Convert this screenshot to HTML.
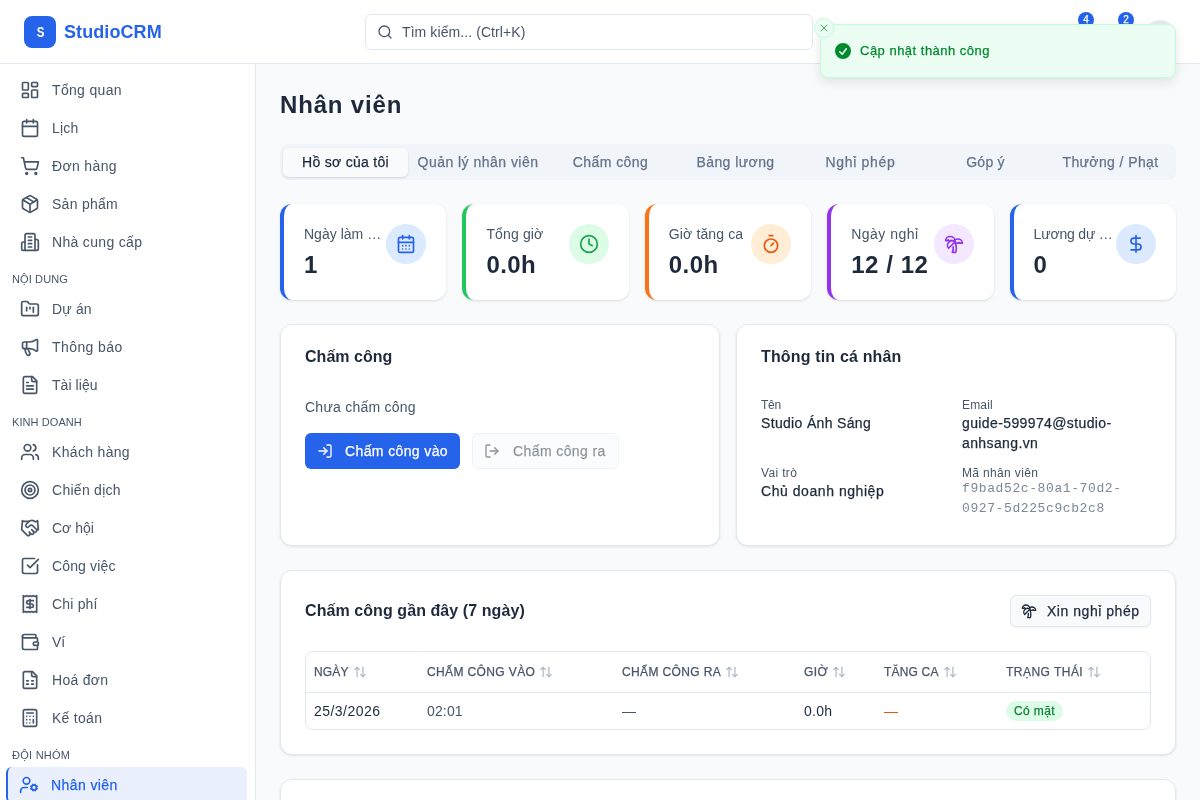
<!DOCTYPE html>
<html lang="vi"><head>
<meta charset="utf-8">
<title>StudioCRM - Nhân viên</title>
<style>
*{box-sizing:border-box;margin:0;padding:0}
html,body{width:1200px;height:800px;overflow:hidden}
body{font-family:"Liberation Sans",sans-serif;background:#f8fafc;color:#1e293b;position:relative;-webkit-font-smoothing:antialiased}
#root{position:absolute;left:0;top:0;width:1200px;height:800px;overflow:hidden;will-change:transform}
.abs{position:absolute}
svg.i{fill:none;stroke:currentColor;stroke-width:2;stroke-linecap:round;stroke-linejoin:round;display:block}
/* header */
#hdr{left:0;top:0;width:1200px;height:64px;background:#fff;border-bottom:1px solid #e2e8f0}
#logo{left:24px;top:16px;width:32px;height:32px;border-radius:8px;background:#2563eb;color:#fff;font-weight:700;font-size:14px;line-height:32px;text-align:center}
#brand{left:64px;top:20px;height:24px;line-height:24px;font-size:18px;font-weight:700;color:#2563eb;white-space:nowrap}
#search{left:365px;top:14px;width:448px;height:36px;border:1px solid #e2e8f0;border-radius:6px;background:#fff}
#search svg{position:absolute;left:11px;top:9px;color:#475569}
#search span{position:absolute;left:36px;top:7px;line-height:20px;font-size:14px;color:#475569;white-space:nowrap}
.badge{width:16px;height:16px;border-radius:8px;background:#2563eb;color:#fff;font-size:10px;line-height:16px;text-align:center;font-weight:500}
#avatar{left:1144px;top:20px;width:32px;height:32px;border-radius:16px;background:#e8ecf1}
/* sidebar */
#side{left:0;top:64px;width:256px;height:736px;background:#fff;border-right:1px solid #e2e8f0}
.nav{position:absolute;left:6px;width:241px;height:36px;border-left:2px solid transparent;border-radius:6px;color:#475569;font-size:14px}
.nav svg{position:absolute;left:12px;top:8px}
.nav span{position:absolute;left:44px;top:8px;line-height:20px;white-space:nowrap}
.nav.act{background:#e9effd;border-left-color:#2563eb;color:#2563eb}
.nav.act svg{left:11px}.nav.act span{left:43px}
.sec{position:absolute;left:12px;font-size:11px;font-weight:400;color:#475569;line-height:16px;white-space:nowrap;letter-spacing:0}
/* main */
#title{left:280px;top:88.5px;line-height:32px;font-size:24px;font-weight:700;color:#1e293b;white-space:nowrap}
#tabs{left:280px;top:144px;width:896px;height:36px;background:#f1f5f9;border-radius:8px}
.tab{position:absolute;top:3.5px;height:29px;line-height:27px;border:1px solid transparent;border-radius:6px;text-align:center;font-size:14px;font-weight:500;color:#64748b;white-space:nowrap}
.tab.act{background:#f8fafc;color:#1e293b;box-shadow:0 1px 3px rgba(0,0,0,.1),0 1px 2px -1px rgba(0,0,0,.1)}
.stat{position:absolute;top:204px;width:166.4px;height:96px;background:#fff;border-radius:12px;border-left:4px solid #2563eb;box-shadow:0 1px 3px 0 rgba(0,0,0,.1),0 1px 2px -1px rgba(0,0,0,.1)}
.stat .lb{position:absolute;left:20px;top:20px;line-height:20px;font-size:14px;color:#475569;white-space:nowrap}
.stat .vl{position:absolute;left:20px;top:44.5px;line-height:32px;font-size:24px;font-weight:700;color:#1e293b;white-space:nowrap}
.stat .ic{position:absolute;right:20px;top:20px;width:40px;height:40px;border-radius:20px}
.stat .ic svg{position:absolute;left:10px;top:10px}
.card{position:absolute;background:#fff;border:1px solid #e2e8f0;border-radius:12px;box-shadow:0 1px 3px 0 rgba(0,0,0,.08),0 1px 2px -1px rgba(0,0,0,.08)}
.ct{position:absolute;left:24px;line-height:16px;font-size:16px;font-weight:600;color:#1e293b;white-space:nowrap}
.btn{position:absolute;height:36px;border-radius:6px;font-size:14px;font-weight:500;white-space:nowrap}
.btn svg{position:absolute;left:12px;top:10px}
.btn span{position:absolute;top:8px;line-height:20px}
.btn.pri{background:#2563eb;color:#fff}
.btn.dis{background:#f8fafc;border:1px solid #e2e8f0;color:#1e293b;opacity:.5}
.btn.dis svg{top:9px;left:11px}.btn.dis span{top:7px;left:40px!important}
.btn.out{background:#f8fafc;border:1px solid #e2e8f0;color:#1e293b;box-shadow:0 1px 2px rgba(0,0,0,.05)}
.lab{position:absolute;line-height:16px;font-size:12px;color:#475569;white-space:nowrap}
.val{position:absolute;line-height:20px;font-size:14px;font-weight:500;color:#1e293b;white-space:nowrap}
.mono{position:absolute;line-height:20px;font-size:13px;letter-spacing:.6px;font-family:"Liberation Mono",monospace;color:#7c889a;white-space:nowrap}
.th{position:absolute;top:12px;line-height:16px;font-size:12px;font-weight:500;letter-spacing:.6px;color:#475569;white-space:nowrap;display:flex;align-items:center}
.th .srt{margin-left:4px;color:#94a3b8;opacity:.8}
.td{position:absolute;top:49px;line-height:20px;font-size:14px;color:#1e293b;white-space:nowrap}
.pill{height:20px;line-height:20px;padding:0 8px;border-radius:10px;background:#dcfce7;color:#15803d;font-size:12px;font-weight:500;white-space:nowrap}
#toast{left:820px;top:24px;width:356px;height:54px;background:#ecfdf3;border:1px solid #bffcd9;border-radius:8px;box-shadow:0 4px 12px rgba(0,0,0,.1);color:#008a2e}
#tclose{position:absolute;left:-7px;top:-7px;width:20px;height:20px;border-radius:10px;background:#ecfdf3;border:1px solid #bffcd9;color:#008a2e}
#tclose svg{position:absolute;left:3px;top:3px}
#ttext{position:absolute;left:39px;top:16px;line-height:19.5px;font-size:13px;font-weight:500;white-space:nowrap}
/*med*/.tab,.btn span,.val,.th,.pill,#ttext,.badge,.nav.act span{-webkit-text-stroke:.25px currentColor}
</style>
</head>
<body><div id="root">
<!-- HEADER -->
<div id="hdr" class="abs">
  <div id="logo" class="abs"><span style="display:inline-block;transform:translateX(.8px) scaleX(.82)">S</span></div>
  <div id="brand" class="abs" style="letter-spacing: 0.089px;">StudioCRM</div>
  <div id="search" class="abs">
    <svg class="i" width="16" height="16" viewBox="0 0 24 24"><circle cx="11" cy="11" r="8"></circle><path d="m21 21-4.3-4.3"></path></svg>
    <span style="letter-spacing: 0.087px;">Tìm kiếm... (Ctrl+K)</span>
  </div>
  <div class="abs badge" style="left:1078px;top:12px">4</div>
  <div class="abs badge" style="left:1118px;top:12px">2</div>
  <div id="avatar" class="abs"></div>
</div>

<!-- SIDEBAR -->
<div id="side" class="abs">
  <div class="nav" style="top:8px"><svg class="i" width="20" height="20" viewBox="0 0 24 24"><rect width="7" height="9" x="3" y="3" rx="1"></rect><rect width="7" height="5" x="14" y="3" rx="1"></rect><rect width="7" height="9" x="14" y="12" rx="1"></rect><rect width="7" height="5" x="3" y="16" rx="1"></rect></svg><span style="letter-spacing: 0.333px;">Tổng quan</span></div>
  <div class="nav" style="top:46px"><svg class="i" width="20" height="20" viewBox="0 0 24 24"><path d="M8 2v4"></path><path d="M16 2v4"></path><rect width="18" height="18" x="3" y="4" rx="2"></rect><path d="M3 10h18"></path></svg><span style="letter-spacing: 0.16px;">Lịch</span></div>
  <div class="nav" style="top:84px"><svg class="i" width="20" height="20" viewBox="0 0 24 24"><circle cx="8" cy="21" r="1"></circle><circle cx="19" cy="21" r="1"></circle><path d="M2.05 2.05h2l2.66 12.42a2 2 0 0 0 2 1.58h9.78a2 2 0 0 0 1.95-1.57l1.65-7.43H5.12"></path></svg><span style="letter-spacing: 0.348px;">Đơn hàng</span></div>
  <div class="nav" style="top:122px"><svg class="i" width="20" height="20" viewBox="0 0 24 24"><path d="M11 21.73a2 2 0 0 0 2 0l7-4A2 2 0 0 0 21 16V8a2 2 0 0 0-1-1.73l-7-4a2 2 0 0 0-2 0l-7 4A2 2 0 0 0 3 8v8a2 2 0 0 0 1 1.73z"></path><path d="M12 22V12"></path><path d="m3.3 7 7.703 4.734a2 2 0 0 0 1.994 0L20.7 7"></path><path d="m7.5 4.27 9 5.15"></path></svg><span style="letter-spacing: 0.277px;">Sản phẩm</span></div>
  <div class="nav" style="top:160px"><svg class="i" width="20" height="20" viewBox="0 0 24 24"><path d="M6 22V4a2 2 0 0 1 2-2h8a2 2 0 0 1 2 2v18Z"></path><path d="M6 12H4a2 2 0 0 0-2 2v6a2 2 0 0 0 2 2h2"></path><path d="M18 9h2a2 2 0 0 1 2 2v9a2 2 0 0 1-2 2h-2"></path><path d="M10 6h4"></path><path d="M10 10h4"></path><path d="M10 14h4"></path><path d="M10 18h4"></path></svg><span style="letter-spacing: 0.32px;">Nhà cung cấp</span></div>
  <div class="sec" style="top: 207px; letter-spacing: 0.123px;">NỘI DUNG</div>
  <div class="nav" style="top:227px"><svg class="i" width="20" height="20" viewBox="0 0 24 24"><path d="M4 20h16a2 2 0 0 0 2-2V8a2 2 0 0 0-2-2h-7.93a2 2 0 0 1-1.66-.9l-.82-1.2A2 2 0 0 0 7.93 3H4a2 2 0 0 0-2 2v13c0 1.1.9 2 2 2Z"></path><path d="M8 10v4"></path><path d="M12 10v2"></path><path d="M16 10v6"></path></svg><span style="letter-spacing: 0.172px;">Dự án</span></div>
  <div class="nav" style="top:265px"><svg class="i" width="20" height="20" viewBox="0 0 24 24"><path d="M11 6a13 13 0 0 0 8.4-2.8A1 1 0 0 1 21 4v12a1 1 0 0 1-1.6.8A13 13 0 0 0 11 14H5a2 2 0 0 1-2-2V8a2 2 0 0 1 2-2z"></path><path d="M6 14a12 12 0 0 0 2.4 7.2 2 2 0 0 0 3.2-2.4A8 8 0 0 1 10 14"></path><path d="M8 6v8"></path></svg><span style="letter-spacing: 0.422px;">Thông báo</span></div>
  <div class="nav" style="top:303px"><svg class="i" width="20" height="20" viewBox="0 0 24 24"><path d="M15 2H6a2 2 0 0 0-2 2v16a2 2 0 0 0 2 2h12a2 2 0 0 0 2-2V7Z"></path><path d="M14 2v4a2 2 0 0 0 2 2h4"></path><path d="M10 9H8"></path><path d="M16 13H8"></path><path d="M16 17H8"></path></svg><span style="letter-spacing: 0.068px;">Tài liệu</span></div>
  <div class="sec" style="top: 350px; letter-spacing: 0.08px;">KINH DOANH</div>
  <div class="nav" style="top:370px"><svg class="i" width="20" height="20" viewBox="0 0 24 24"><path d="M16 21v-2a4 4 0 0 0-4-4H6a4 4 0 0 0-4 4v2"></path><circle cx="9" cy="7" r="4"></circle><path d="M22 21v-2a4 4 0 0 0-3-3.87"></path><path d="M16 3.13a4 4 0 0 1 0 7.75"></path></svg><span style="letter-spacing: 0.322px;">Khách hàng</span></div>
  <div class="nav" style="top:408px"><svg class="i" width="20" height="20" viewBox="0 0 24 24"><circle cx="12" cy="12" r="10"></circle><circle cx="12" cy="12" r="6"></circle><circle cx="12" cy="12" r="2"></circle></svg><span style="letter-spacing: 0.275px;">Chiến dịch</span></div>
  <div class="nav" style="top:446px"><svg class="i" width="20" height="20" viewBox="0 0 24 24"><path d="m11 17 2 2a1 1 0 1 0 3-3"></path><path d="m14 14 2.5 2.5a1 1 0 1 0 3-3l-3.88-3.88a3 3 0 0 0-4.24 0l-.88.88a1 1 0 1 1-3-3l2.81-2.81a5.79 5.79 0 0 1 7.06-.87l.47.28a2 2 0 0 0 1.42.25L21 4"></path><path d="m21 3 1 11h-2"></path><path d="M3 3 2 14l6.5 6.5a1 1 0 1 0 3-3"></path><path d="M3 4h8"></path></svg><span style="letter-spacing: -0.003px;">Cơ hội</span></div>
  <div class="nav" style="top:484px"><svg class="i" width="20" height="20" viewBox="0 0 24 24"><path d="M21 10.5V19a2 2 0 0 1-2 2H5a2 2 0 0 1-2-2V5a2 2 0 0 1 2-2h12.5"></path><path d="m9 11 3 3L22 4"></path></svg><span style="letter-spacing: 0.144px;">Công việc</span></div>
  <div class="nav" style="top:522px"><svg class="i" width="20" height="20" viewBox="0 0 24 24"><path d="M4 2v20l2-1 2 1 2-1 2 1 2-1 2 1 2-1 2 1V2l-2 1-2-1-2 1-2-1-2 1-2-1-2 1Z"></path><path d="M16 8h-6a2 2 0 1 0 0 4h4a2 2 0 1 1 0 4H8"></path><path d="M12 17.5v-11"></path></svg><span style="letter-spacing: 0.183px;">Chi phí</span></div>
  <div class="nav" style="top:560px"><svg class="i" width="20" height="20" viewBox="0 0 24 24"><path d="M19 7V4a1 1 0 0 0-1-1H5a2 2 0 0 0 0 4h15a1 1 0 0 1 1 1v4h-3a2 2 0 0 0 0 4h3a1 1 0 0 0 1-1v-2a1 1 0 0 0-1-1"></path><path d="M3 5v14a2 2 0 0 0 2 2h15a1 1 0 0 0 1-1v-4"></path></svg><span>Ví</span></div>
  <div class="nav" style="top:598px"><svg class="i" width="20" height="20" viewBox="0 0 24 24"><path d="M15 2H6a2 2 0 0 0-2 2v16a2 2 0 0 0 2 2h12a2 2 0 0 0 2-2V7Z"></path><path d="M14 2v4a2 2 0 0 0 2 2h4"></path><path d="M8 13h2"></path><path d="M14 13h2"></path><path d="M8 17h2"></path><path d="M14 17h2"></path></svg><span style="letter-spacing: 0.277px;">Hoá đơn</span></div>
  <div class="nav" style="top:636px"><svg class="i" width="20" height="20" viewBox="0 0 24 24"><rect width="16" height="20" x="4" y="2" rx="2"></rect><line x1="8" x2="16" y1="6" y2="6"></line><line x1="16" x2="16" y1="14" y2="18"></line><path d="M16 10h.01"></path><path d="M12 10h.01"></path><path d="M8 10h.01"></path><path d="M12 14h.01"></path><path d="M8 14h.01"></path><path d="M12 18h.01"></path><path d="M8 18h.01"></path></svg><span style="letter-spacing: 0.281px;">Kế toán</span></div>
  <div class="sec" style="top: 683px; letter-spacing: 0.258px;">ĐỘI NHÓM</div>
  <div class="nav act" style="top:703px"><svg class="i" width="20" height="20" viewBox="0 0 24 24"><circle cx="18" cy="15" r="3"></circle><circle cx="9" cy="7" r="4"></circle><path d="M10 15H6a4 4 0 0 0-4 4v2"></path><path d="m21.7 16.4-.9-.3"></path><path d="m15.2 13.9-.9-.3"></path><path d="m16.6 18.7.3-.9"></path><path d="m19.1 12.2.3-.9"></path><path d="m19.6 18.7-.4-1"></path><path d="m16.8 12.3-.4-1"></path><path d="m14.3 16.6 1-.4"></path><path d="m20.7 13.8 1-.4"></path></svg><span style="letter-spacing: 0.408px;">Nhân viên</span></div>
</div>

<!-- MAIN -->
<div id="title" class="abs" style="letter-spacing: 0.826px;">Nhân viên</div>
<div id="tabs" class="abs"><div class="tab act" style="left: 3px; width: 125px; letter-spacing: 0.299px;">Hồ sơ của tôi</div><div class="tab" style="left: 128px; width: 140px; letter-spacing: 0.476px;">Quản lý nhân viên</div><div class="tab" style="left: 268px; width: 125px; letter-spacing: 0.431px;">Chấm công</div><div class="tab" style="left: 393px; width: 125px; letter-spacing: 0.434px;">Bảng lương</div><div class="tab" style="left: 518px; width: 125px; letter-spacing: 0.677px;">Nghỉ phép</div><div class="tab" style="left: 643px; width: 125px; letter-spacing: 0.219px;">Góp ý</div><div class="tab" style="left: 768px; width: 125px; letter-spacing: 0.399px;">Thưởng / Phạt</div></div>
<div class="stat" style="left:280px;border-left-color:#2563eb"><div class="lb" style="letter-spacing: 0.013px;">Ngày làm …</div><div class="vl">1</div><div class="ic" style="background:#dbeafe;color:#2563eb"><svg class="i" width="20" height="20" viewBox="0 0 24 24"><path d="M8 2v4"></path><path d="M16 2v4"></path><rect width="18" height="18" x="3" y="4" rx="2"></rect><path d="M3 10h18"></path><path d="M8 14h.01"></path><path d="M12 14h.01"></path><path d="M16 14h.01"></path><path d="M8 18h.01"></path><path d="M12 18h.01"></path><path d="M16 18h.01"></path></svg></div></div><div class="stat" style="left:462.4px;border-left-color:#22c55e"><div class="lb" style="letter-spacing: 0.143px;">Tổng giờ</div><div class="vl" style="letter-spacing: 0.445px;">0.0h</div><div class="ic" style="background:#dcfce7;color:#16a34a"><svg class="i" width="20" height="20" viewBox="0 0 24 24"><circle cx="12" cy="12" r="10"></circle><polyline points="12 6 12 12 16 14"></polyline></svg></div></div><div class="stat" style="left:644.8px;border-left-color:#f97316"><div class="lb" style="letter-spacing: 0.132px;">Giờ tăng ca</div><div class="vl" style="letter-spacing: 0.445px;">0.0h</div><div class="ic" style="background:#ffedd5;color:#ea580c"><svg class="i" width="20" height="20" viewBox="0 0 24 24"><line x1="10" x2="14" y1="2" y2="2"></line><line x1="12" x2="15" y1="14" y2="11"></line><circle cx="12" cy="14" r="8"></circle></svg></div></div><div class="stat" style="left:827.2px;border-left-color:#9333ea"><div class="lb" style="letter-spacing: 0.486px;">Ngày nghỉ</div><div class="vl" style="letter-spacing: 0.565px;">12 / 12</div><div class="ic" style="background:#f3e8ff;color:#9333ea"><svg class="i" width="20" height="20" viewBox="0 0 24 24"><path d="M13 8c0-2.76-2.46-5-5.5-5S2 5.24 2 8h2l1-1 1 1h4"></path><path d="M13 7.14A5.82 5.82 0 0 1 16.5 6c3.04 0 5.5 2.24 5.5 5h-3l-1-1-1 1h-3"></path><path d="M5.89 9.71c-2.15 2.15-2.3 5.47-.35 7.43l4.24-4.25.7-.7.71-.71 2.12-2.12c-1.95-1.96-5.27-1.8-7.42.35"></path><path d="M11 15.5c.5 2.5-.17 4.5-1 6.5h4c2-5.5-.5-12-1-14"></path></svg></div></div><div class="stat" style="left:1009.6px;border-left-color:#2563eb"><div class="lb" style="letter-spacing: -0.18px;">Lương dự …</div><div class="vl">0</div><div class="ic" style="background:#dbeafe;color:#2563eb"><svg class="i" width="20" height="20" viewBox="0 0 24 24"><line x1="12" x2="12" y1="2" y2="22"></line><path d="M17 5H9.5a3.5 3.5 0 0 0 0 7h5a3.5 3.5 0 0 1 0 7H6"></path></svg></div></div>
<div class="card" style="left:280px;top:324px;width:440px;height:222px">
  <div class="ct" style="top: 24px; letter-spacing: 0.035px;">Chấm công</div>
  <div class="abs" style="left: 24px; top: 72px; line-height: 20px; font-size: 14px; color: rgb(71, 85, 105); white-space: nowrap; letter-spacing: 0.243px;">Chưa chấm công</div>
  <div class="btn pri" style="left:24px;top:108px;width:155px"><svg class="i" width="16" height="16" viewBox="0 0 24 24"><path d="M15 3h4a2 2 0 0 1 2 2v14a2 2 0 0 1-2 2h-4"></path><polyline points="10 17 15 12 10 7"></polyline><line x1="15" x2="3" y1="12" y2="12"></line></svg><span style="left: 40px; letter-spacing: 0.383px;">Chấm công vào</span></div>
  <div class="btn dis" style="left:191px;top:108px;width:147px"><svg class="i" width="16" height="16" viewBox="0 0 24 24"><path d="M9 21H5a2 2 0 0 1-2-2V5a2 2 0 0 1 2-2h4"></path><polyline points="16 17 21 12 16 7"></polyline><line x1="21" x2="9" y1="12" y2="12"></line></svg><span style="left: 40px; letter-spacing: 0.401px;">Chấm công ra</span></div>
</div>
<div class="card" style="left:736px;top:324px;width:440px;height:222px">
  <div class="ct" style="top: 24px; letter-spacing: 0.161px;">Thông tin cá nhân</div>
  <div class="lab" style="left: 24px; top: 71.5px; letter-spacing: -0.219px;">Tên</div>
  <div class="val" style="left: 24px; top: 88px; letter-spacing: 0.329px;">Studio Ánh Sáng</div>
  <div class="lab" style="left: 225px; top: 71.5px; letter-spacing: 0.163px;">Email</div>
  <div class="val" style="left: 225px; top: 88px; letter-spacing: 0.384px;">guide-599974@studio-<br>anhsang.vn</div>
  <div class="lab" style="left: 24px; top: 139.5px; letter-spacing: 0.346px;">Vai trò</div>
  <div class="val" style="left: 24px; top: 155.5px; letter-spacing: 0.552px;">Chủ doanh nghiệp</div>
  <div class="lab" style="left: 225px; top: 139.5px; letter-spacing: 0.348px;">Mã nhân viên</div>
  <div class="mono" style="left:225px;top:153.5px">f9bad52c-80a1-70d2-<br>0927-5d225c9cb2c8</div>
</div>
<div class="card" style="left:280px;top:570px;width:896px;height:185px">
  <div class="ct" style="top: 32px; letter-spacing: 0.076px;">Chấm công gần đây (7 ngày)</div>
  <div class="btn out" style="left:729px;top:24px;width:141px;height:32px"><svg class="i" width="16" height="16" viewBox="0 0 24 24" style="top:7px;left:10px"><path d="M13 8c0-2.76-2.46-5-5.5-5S2 5.24 2 8h2l1-1 1 1h4"></path><path d="M13 7.14A5.82 5.82 0 0 1 16.5 6c3.04 0 5.5 2.24 5.5 5h-3l-1-1-1 1h-3"></path><path d="M5.89 9.71c-2.15 2.15-2.3 5.47-.35 7.43l4.24-4.25.7-.7.71-.71 2.12-2.12c-1.95-1.96-5.27-1.8-7.42.35"></path><path d="M11 15.5c.5 2.5-.17 4.5-1 6.5h4c2-5.5-.5-12-1-14"></path></svg><span style="left: 36px; top: 5px; letter-spacing: 0.535px;">Xin nghỉ phép</span></div>
  <div id="tbl" class="abs" style="left:24px;top:80px;width:846px;height:79px;border:1px solid #e2e8f0;border-radius:8px">
    <div class="abs" style="left:0;top:40px;width:844px;height:1px;background:#e2e8f0"></div>
    <div class="th" style="left: 8px; letter-spacing: 0.143px;">NGÀY<svg class="i srt" width="14" height="14" viewBox="0 0 24 24"><path d="m21 16-4 4-4-4"></path><path d="M17 20V4"></path><path d="m3 8 4-4 4 4"></path><path d="M7 4v16"></path></svg></div>
    <div class="th" style="left: 121px; letter-spacing: 0.378px;">CHẤM CÔNG VÀO<svg class="i srt" width="14" height="14" viewBox="0 0 24 24"><path d="m21 16-4 4-4-4"></path><path d="M17 20V4"></path><path d="m3 8 4-4 4 4"></path><path d="M7 4v16"></path></svg></div>
    <div class="th" style="left: 316px; letter-spacing: 0.376px;">CHẤM CÔNG RA<svg class="i srt" width="14" height="14" viewBox="0 0 24 24"><path d="m21 16-4 4-4-4"></path><path d="M17 20V4"></path><path d="m3 8 4-4 4 4"></path><path d="M7 4v16"></path></svg></div>
    <div class="th" style="left: 498px; letter-spacing: 0.449px;">GIỜ<svg class="i srt" width="14" height="14" viewBox="0 0 24 24"><path d="m21 16-4 4-4-4"></path><path d="M17 20V4"></path><path d="m3 8 4-4 4 4"></path><path d="M7 4v16"></path></svg></div>
    <div class="th" style="left: 578px; letter-spacing: 0.18px;">TĂNG CA<svg class="i srt" width="14" height="14" viewBox="0 0 24 24"><path d="m21 16-4 4-4-4"></path><path d="M17 20V4"></path><path d="m3 8 4-4 4 4"></path><path d="M7 4v16"></path></svg></div>
    <div class="th" style="left: 700px; letter-spacing: 0.473px;">TRẠNG THÁI<svg class="i srt" width="14" height="14" viewBox="0 0 24 24"><path d="m21 16-4 4-4-4"></path><path d="M17 20V4"></path><path d="m3 8 4-4 4 4"></path><path d="M7 4v16"></path></svg></div>
    <div class="td" style="left: 8px; letter-spacing: 0.465px;">25/3/2026</div>
    <div class="td" style="left: 121px; color: rgb(71, 85, 105); letter-spacing: 0.15px;">02:01</div>
    <div class="td" style="left:316px;color:#475569">—</div>
    <div class="td" style="left: 498px; letter-spacing: 0.293px;">0.0h</div>
    <div class="td" style="left:578px;color:#ea580c">—</div>
    <div class="abs pill" style="left: 700px; top: 49px; letter-spacing: 0.37px;">Có mặt</div>
  </div>
</div>
<div class="card" style="left:280px;top:779px;width:896px;height:200px"></div>

<div id="toast" class="abs">
  <div id="tclose"><svg class="i" width="12" height="12" viewBox="0 0 24 24" style="stroke-width:1.5"><path d="M18 6 6 18"></path><path d="m6 6 12 12"></path></svg></div>
  <svg width="20" height="20" viewBox="0 0 20 20" fill="currentColor" style="position:absolute;left:12px;top:16px"><path fill-rule="evenodd" d="M10 18a8 8 0 100-16 8 8 0 000 16zm3.857-9.809a.75.75 0 00-1.214-.882l-3.483 4.79-1.88-1.88a.75.75 0 10-1.06 1.061l2.5 2.5a.75.75 0 001.137-.089l4-5.5z" clip-rule="evenodd"></path></svg>
  <div id="ttext" style="letter-spacing: 0.489px;">Cập nhật thành công</div>
</div>


</div>

</body></html>
